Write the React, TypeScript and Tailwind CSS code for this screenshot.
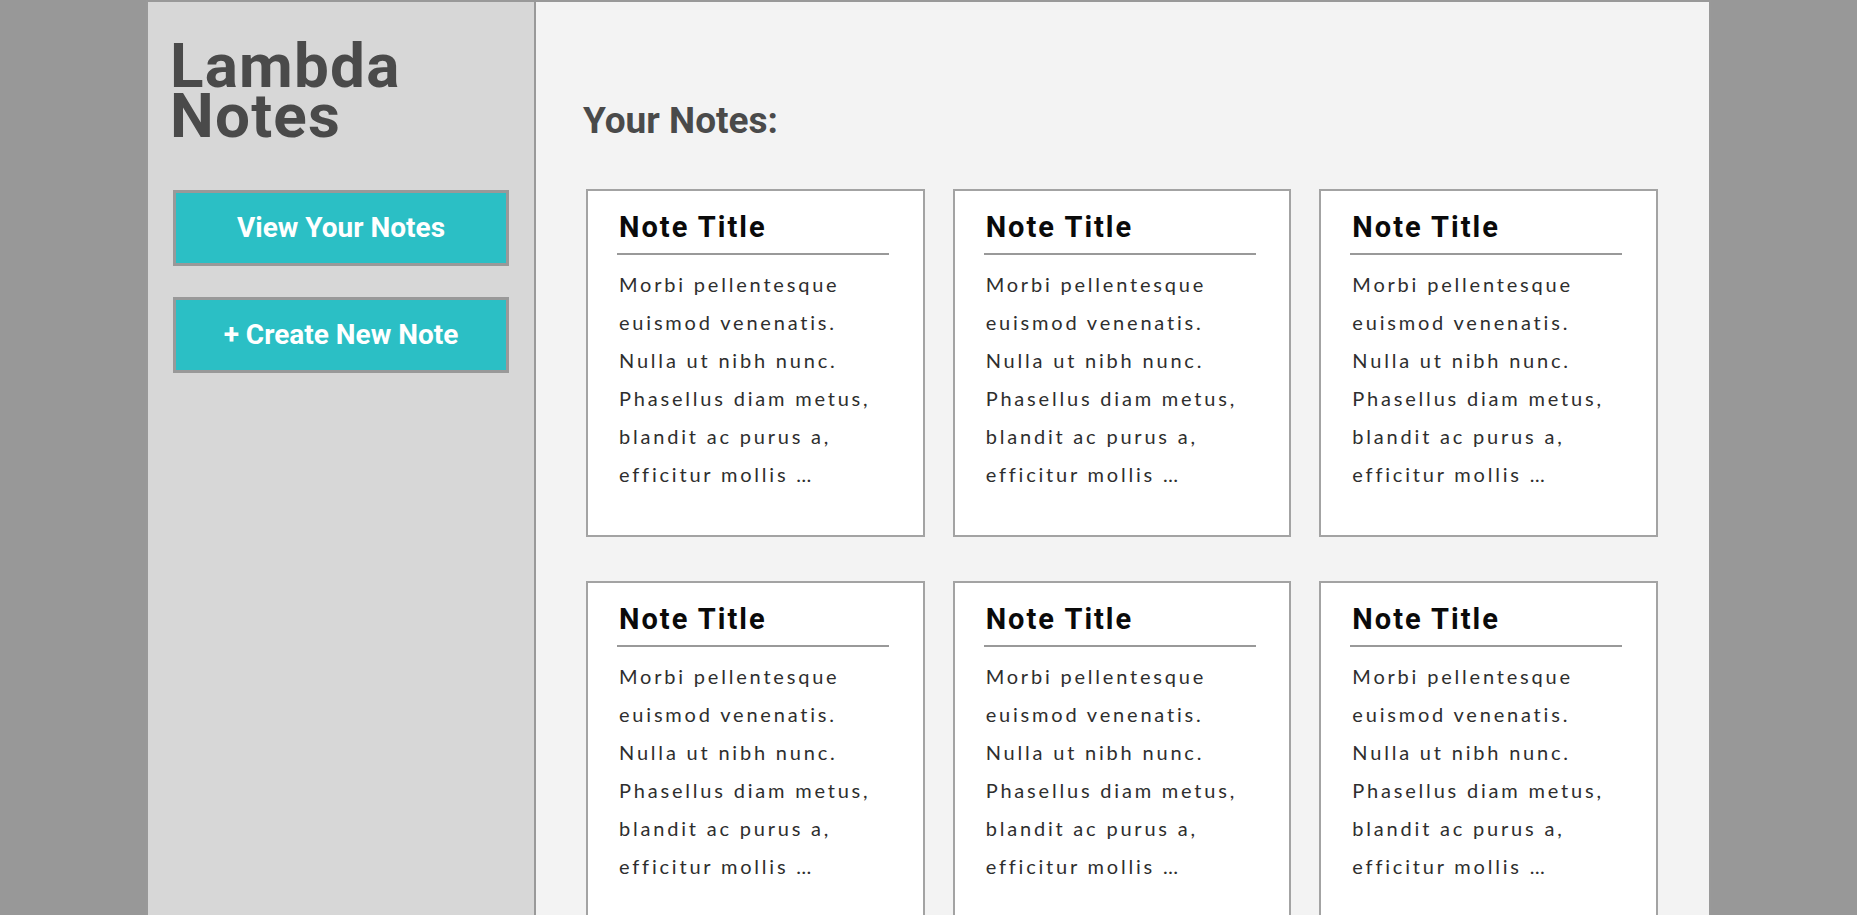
const notes = Array.from({ length: 6 }, (_, i) => ({
  id: i,
  title: "Note Title",
  lines: [
    "Morbi pellentesque",
    "euismod venenatis.",
    "Nulla ut nibh nunc.",
    "Phasellus diam metus,",
    "blandit ac purus a,",
    "efficitur mollis …",
  ],
}));

const NoteCard = ({ title, lines }: { title: string; lines: string[] }) => (
  <div className="border-2 border-[#a3a3a3] bg-white pl-[29px] pt-[18px] pb-[42px]">
    <h3 className="w-[272px] border-b-2 border-[#999] pb-[8px] pl-[2px] text-[29px] leading-[36px] font-bold tracking-[2px] text-[#0a0a0a]">
      {title}
    </h3>
    <div className="mt-[10px] pl-[2px] font-['Lato',sans-serif] text-[20px] leading-[38px] tracking-[2.8px] text-[#2e2e2e]">
      {lines.map((l) => (
        <div key={l}>{l}</div>
      ))}
    </div>
  </div>
);

export default function App() {
  return (
    <div className="h-screen overflow-hidden bg-[#989898] font-['Roboto',sans-serif]">
      <div className="mx-auto flex h-full w-[1565px] border-x-2 border-t-2 border-[#999]">
        <aside className="w-[388px] shrink-0 border-r-2 border-[#999] bg-[#d7d7d7] px-[25px] pt-[39px]">
          <h1 className="-ml-[3px] text-[62px] leading-[50px] font-bold tracking-[1.2px] text-[#4a4a4a]">
            Lambda
            <br />
            Notes
          </h1>
          <div className="mt-[49px] flex flex-col gap-[31px]">
            <button className="h-[76px] w-full border-[3px] border-[#999] bg-[#2bbfc5] text-[28px] font-bold text-white">
              View Your Notes
            </button>
            <button className="h-[76px] w-full border-[3px] border-[#999] bg-[#2bbfc5] text-[28px] font-bold text-white">
              + Create New Note
            </button>
          </div>
        </aside>
        <main className="flex-1 bg-[#f3f3f3] pl-[50px] pr-[51px] pt-[97px]">
          <h2 className="-ml-[3px] text-[37px] leading-[44px] font-bold text-[#4a4a4a]">Your Notes:</h2>
          <div className="mt-[46px] grid grid-cols-3 gap-x-[28px] gap-y-[44px]">
            {notes.map((n) => (
              <NoteCard key={n.id} title={n.title} lines={n.lines} />
            ))}
          </div>
        </main>
      </div>
    </div>
  );
}
